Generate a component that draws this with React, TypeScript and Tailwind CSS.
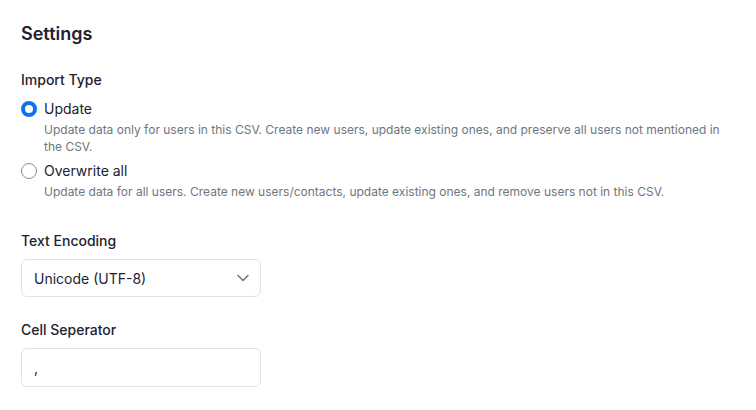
import React, { useState } from "react";

const options = [
  {
    id: "update",
    label: "Update",
    desc: "Update data only for users in this CSV. Create new users, update existing ones, and preserve all users not mentioned in the CSV.",
  },
  {
    id: "overwrite",
    label: "Overwrite all",
    desc: "Update data for all users. Create new users/contacts, update existing ones, and remove users not in this CSV.",
  },
];

function Radio({ checked }: { checked: boolean }) {
  return checked ? (
    <span className="box-border h-4 w-4 shrink-0 rounded-full border-[4px] border-[#0e72ed] bg-white" />
  ) : (
    <span className="box-border h-4 w-4 shrink-0 rounded-full border border-[#8b8f96] bg-white" />
  );
}

export default function App() {
  const [type, setType] = useState("update");

  return (
    <div className="min-h-screen bg-white px-[21px] pt-[20px] text-[#222230]" style={{ fontFamily: "Inter, 'Liberation Sans', sans-serif" }}>
      <h2 className="text-[18px] font-semibold leading-[28px]">Settings</h2>

      <div className="mt-[22px] text-[14px] font-medium leading-[20px]">Import Type</div>
      <div className="flex flex-col">
        {options.map((o, i) => (
          <div key={o.id} className={i === 0 ? "mt-[9px]" : "mt-[6px]"}>
            <label className="flex cursor-pointer items-center gap-[7px]" onClick={() => setType(o.id)}>
              <Radio checked={type === o.id} />
              <span className="text-[14px] leading-[20px]">{o.label}</span>
            </label>
            <p className="mt-[2px] pl-[23px] pr-[12px] text-[12px] leading-[17px] text-[#6e7680]">{o.desc}</p>
          </div>
        ))}
      </div>

      <div className="mt-[31px] text-[14px] font-medium leading-[20px]">Text Encoding</div>
      <button className="mt-[8px] flex h-[38px] w-[240px] items-center justify-between rounded-[6px] border border-[#dfe1e5] bg-white pl-[12px] pr-[10px] text-[14px]">
        <span>Unicode (UTF-8)</span>
        <svg width="14" height="14" viewBox="0 0 14 14" fill="none">
          <path d="M2 4.5L7 9.5L12 4.5" stroke="#6e7680" strokeWidth="1.5" strokeLinecap="round" strokeLinejoin="round" />
        </svg>
      </button>

      <div className="mt-[23px] text-[14px] font-medium leading-[20px]">Cell Seperator</div>
      <input
        defaultValue=","
        className="mt-[8px] box-border h-[39px] w-[240px] rounded-[6px] border border-[#dfe1e5] bg-white px-[12px] text-[14px] outline-none"
      />
    </div>
  );
}
